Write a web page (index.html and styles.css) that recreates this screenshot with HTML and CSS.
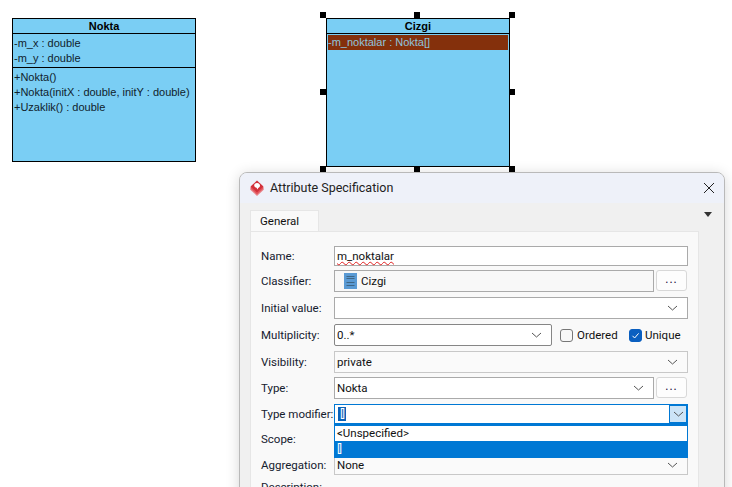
FILE: index.html
```html
<!DOCTYPE html>
<html>
<head>
  <meta charset="UTF-8"/>
  <title>Attribute Specification</title>
  <link rel="stylesheet" href="styles.css">
</head>
<body>
<div id="canvas">
  <div class="uml nokta">
    <div class="uml-name">Nokta</div>
    <div class="uml-attrs">
      <div>-m_x : double</div>
      <div>-m_y : double</div>
    </div>
    <div class="uml-ops">
      <div>+Nokta()</div>
      <div>+Nokta(initX : double, initY : double)</div>
      <div>+Uzaklik() : double</div>
    </div>
  </div>

  <div class="uml cizgi">
    <div class="uml-name">Cizgi</div>
    <div class="uml-attrs plain">
      <div class="picked">-m_noktalar : Nokta[]</div>
    </div>
    <i class="grip g1"></i><i class="grip g2"></i><i class="grip g3"></i>
    <i class="grip g4"></i><i class="grip g5"></i>
    <i class="grip g6"></i><i class="grip g7"></i><i class="grip g8"></i>
  </div>

  <div id="dialog">
    <div class="titlebar">
      <svg class="logo" width="16" height="16" viewBox="0 0 16 16">
        <path d="M1 9.5 L8 16 L15 9.5 L8 3 Z" fill="#e8868b"/>
        <path d="M1 8 L8 14.5 L15 8 L8 1.5 Z" fill="#e2555c"/>
        <path d="M1.5 6.5 L8 12.5 L14.5 6.5 L8 0.5 Z" fill="#d2303a"/>
        <path d="M8 3 C10 3 11.2 4.4 11 6 C10.8 7.2 9.8 7.6 9.2 8 L8.4 9.6 L7.6 7.8 C6.4 7.4 5.2 6.6 5.2 5.4 C5.2 4 6.4 3 8 3 Z" fill="#fff"/>
      </svg>
      <span class="title">Attribute Specification</span>
      <svg class="close" width="12" height="12" viewBox="0 0 12 12">
        <path d="M1 1 L11 11 M11 1 L1 11" stroke="#222" stroke-width="1"/>
      </svg>
    </div>
    <div class="tabs">
      <div class="tab">General</div>
      <span class="tab-menu"></span>
    </div>
    <div class="panel">
      <div class="row r-name">
        <label>Name:</label>
        <div class="field"><span class="typo">m_noktalar</span></div>
      </div>
      <div class="row">
        <label>Classifier:</label>
        <div class="field classifier">
          <svg width="13" height="16" viewBox="0 0 13 16">
            <rect width="13" height="16" fill="#5a9ad4"/>
            <path d="M2.5 3.5 H10.5 M2.5 5.5 H10.5 M2.5 9.5 H10.5 M2.5 12.5 H10.5" stroke="#3f6685" stroke-width="1"/>
          </svg>
          <span>Cizgi</span>
        </div>
        <button class="more">...</button>
      </div>
      <div class="row">
        <label>Initial value:</label>
        <div class="field combo"><span></span><svg class="chev" width="11" height="6" viewBox="0 0 11 6"><path d="M1 1 L5.5 5 L10 1" fill="none" stroke="#555"/></svg></div>
      </div>
      <div class="row">
        <label>Multiplicity:</label>
        <div class="field combo dark multi"><span>0..*</span><svg class="chev" width="11" height="6" viewBox="0 0 11 6"><path d="M1 1 L5.5 5 L10 1" fill="none" stroke="#555"/></svg></div>
        <span class="check"></span><span class="check-label">Ordered</span>
        <span class="check on"><svg width="13" height="13" viewBox="0 0 13 13"><path d="M3.5 6.8 L5.6 9 L9.6 4.4" fill="none" stroke="#fff"/></svg></span><span class="check-label">Unique</span>
      </div>
      <div class="row r-vis">
        <label>Visibility:</label>
        <div class="field combo soft"><span>private</span><svg class="chev" width="11" height="6" viewBox="0 0 11 6"><path d="M1 1 L5.5 5 L10 1" fill="none" stroke="#555"/></svg></div>
      </div>
      <div class="row">
        <label>Type:</label>
        <div class="field combo"><span>Nokta</span><svg class="chev" width="11" height="6" viewBox="0 0 11 6"><path d="M1 1 L5.5 5 L10 1" fill="none" stroke="#555"/></svg></div>
        <button class="more">...</button>
      </div>
      <div class="row r-mod">
        <label>Type modifier:</label>
        <div class="field combo focus">
          <span class="sel">[]</span>
          <span class="drop-btn"><svg class="chev" width="11" height="6" viewBox="0 0 11 6"><path d="M1 1 L5.5 5 L10 1" fill="none" stroke="#555"/></svg></span>
          <div class="list">
            <div class="item">&lt;Unspecified&gt;</div>
            <div class="item cur">[]</div>
          </div>
        </div>
      </div>
      <div class="row r-scope">
        <label>Scope:</label>
        <div class="field combo soft"></div>
      </div>
      <div class="row r-agg">
        <label>Aggregation:</label>
        <div class="field combo soft"><span>None</span><svg class="chev" width="11" height="6" viewBox="0 0 11 6"><path d="M1 1 L5.5 5 L10 1" fill="none" stroke="#555"/></svg></div>
      </div>
      <div class="row r-desc">
        <label>Description:</label>
      </div>
    </div>
  </div>
</div>
</body>
</html>
```
FILE: styles.css
```css
html, body { margin: 0; padding: 0; overflow: hidden; background: #fff; }
* { box-sizing: border-box; }

#canvas { position: relative; width: 732px; height: 487px; overflow: hidden; }

/* ===== uml shapes ===== */
.uml { position: absolute; top: 18px; width: 184px; background: #7acef4; border: 1px solid #000; font: 11px/15px "Liberation Sans", Arial, sans-serif; color: #10222c; }
.nokta { left: 12px; height: 144px; }
.cizgi { left: 326px; height: 149px; }
.uml-name { height: 15px; font-weight: bold; text-align: center; line-height: 14px; color: #000; border-bottom: 1px solid #000; }
.uml-attrs { padding: 2px 1px 1px; border-bottom: 1px solid #000; }
.uml-attrs.plain { border-bottom: 0; padding: 1px 1px 0; }
.uml-ops { padding: 2px 1px; }
.picked { background: #84300c; color: #8fc4dc; height: 15px; }
.grip { position: absolute; width: 6px; height: 6px; background: #000; }
.g1 { left: -7px; top: -7px; }
.g2 { left: 87px; top: -7px; }
.g3 { left: 182px; top: -7px; }
.g4 { left: -7px; top: 70px; }
.g5 { left: 182px; top: 70px; }
.g6 { left: -7px; top: 147px; }
.g7 { left: 87px; top: 147px; }
.g8 { left: 182px; top: 147px; }

/* ===== dialog ===== */
#dialog { position: absolute; left: 239px; top: 172px; width: 486px; height: 340px; background: #f0f0f0; border: 1px solid #b9b9b9; border-radius: 8px 8px 0 0; box-shadow: 0 2px 14px rgba(0,0,0,.16); font: 11.5px/16px Roboto, "Noto Sans", sans-serif; color: #111; }
.titlebar { display: flex; align-items: center; height: 30px; padding: 0 9px 0 9px; background: #eef1f9; border-radius: 7px 7px 0 0; }
.logo { margin-right: 5px; }
.title { flex: 1; font-size: 12.5px; color: #222; }
.tabs { position: relative; height: 28px; padding: 7px 0 0 10px; }
.tab { width: 69px; height: 21px; padding: 2px 0 0 9px; background: #f9f9f9; border: 1px solid #e6e6e6; border-bottom: 0; }
.tab-menu { position: absolute; right: 12px; top: 9px; border: 4px solid transparent; border-top: 5px solid #333; border-bottom: 0; }
.panel { margin: 0 25px 0 10px; height: 300px; padding: 14px 10px 0 10px; background: #f9f9f9; border: 1px solid #e6e6e6; }
.row { display: flex; align-items: flex-start; height: 27px; }
.row label { width: 73px; flex: none; line-height: 22px; white-space: nowrap; color: #15202e; }
.r-name { height: 24px; }
.r-vis { height: 26px; }
.r-mod { height: 25px; }
.r-scope { height: 26px; }
.r-agg { height: 22px; }
.r-name label, .r-mod label, .r-scope label, .r-agg label, .r-desc label { line-height: 20px; }
.field { position: relative; flex: 1; display: flex; align-items: center; height: 22px; padding: 0 9px 0 2px; background: #fff; border: 1px solid #aaa; }
.r-name .field, .r-scope .field, .r-agg .field { height: 20px; }
.typo { text-decoration: underline wavy #e02020 1px; }
.soft { background: #fafafa; border-color: #c8c8c8; }
.classifier { padding-left: 9px; gap: 4px; background: #f8f8f8; }
.combo span:first-child { flex: 1; }
.chev { flex: none; }
.dark { border-color: #868686; border-radius: 2px; }
.multi { flex: none; width: 218px; }
.more { width: 31px; height: 21px; margin: 0 1px 0 2px; padding: 0 0 4px; background: #fdfdfd; border: 1px solid #d8d8d8; border-radius: 3px; font: 12px/14px Roboto, sans-serif; letter-spacing: 1px; color: #14083a; }
.check { flex: none; width: 13px; height: 13px; margin: 5px 4px 0 8px; background: #f7f7f7; border: 1px solid #777; border-radius: 3px; }
.check.on { margin: 5px 3px 0 12px; background: #0a5fc0; border-color: #0a5fc0; }
.check.on svg { display: block; margin: -1px; }
.check-label { width: 40px; line-height: 22px; white-space: nowrap; }
.focus { height: 20px; border: 1px solid #0078d4; padding-right: 0; padding-left: 3px; }
.sel { flex: none !important; background: #0a62b8; color: #fff; height: 14px; line-height: 13px; padding: 0 2px; letter-spacing: -1px; }
.drop-btn { margin-left: auto; display: flex; align-items: center; justify-content: center; width: 18px; height: 18px; background: #cce4f7; border: 1px solid #0078d4; }
.list { position: absolute; left: -1px; right: -1px; top: 19px; z-index: 5; height: 34px; background: #fff; border: 1px solid #0078d4; border-top-width: 2px; border-bottom: 0; }
.item { height: 15px; padding-left: 2px; line-height: 15px; }
.item.cur { height: 17px; background: #0078d4; color: #fff; letter-spacing: -1px; }
```
